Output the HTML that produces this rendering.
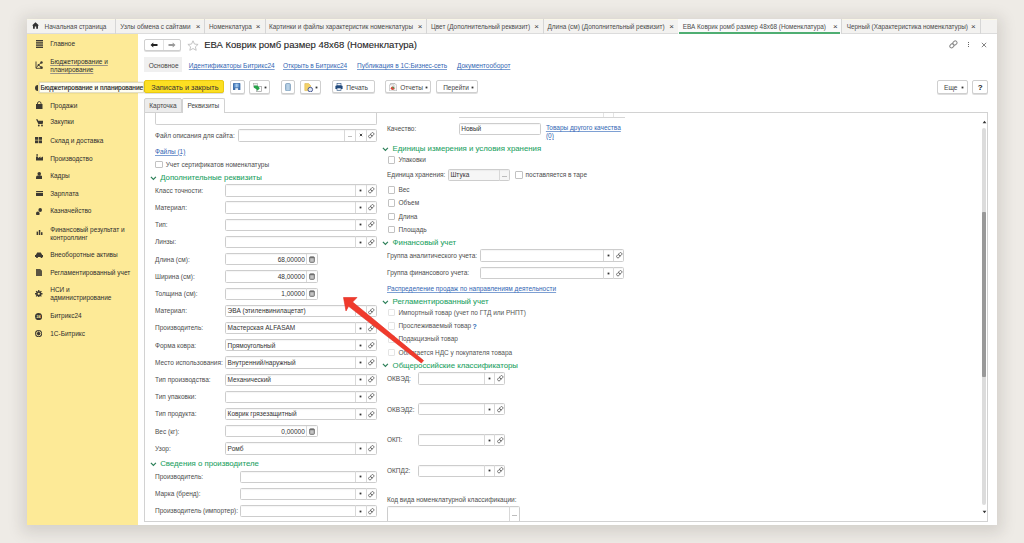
<!DOCTYPE html>
<html><head><meta charset="utf-8"><style>
html,body{margin:0;padding:0;}
body{width:1024px;height:543px;overflow:hidden;position:relative;background:#eeebe6;font-family:"Liberation Sans",sans-serif;}
.t{position:absolute;white-space:nowrap;}
.b{position:absolute;}
</style></head><body>
<div class="b" style="left:27px;top:19px;width:970.00px;height:506.00px;background:#fff;box-shadow:0 3px 14px 5px rgba(50,40,30,0.13);"></div><div class="b" style="left:27px;top:19px;width:970.00px;height:15.00px;background:#f3f2f0;border-bottom:1px solid #dcdcdc;box-sizing:border-box;"></div><div class="b" style="left:27px;top:19px;width:970.00px;height:1.00px;background:#faf7e8;"></div><div class="b" style="left:115px;top:19px;width:1px;height:15px;background:#d6d6d6"></div><div class="t" style="left:44.6px;top:23.68px;font-size:6.4px;line-height:6.4px;color:#4a4a4a;">Начальная страница</div><div class="b" style="left:204px;top:19px;width:1px;height:15px;background:#d6d6d6"></div><div class="t" style="left:120.3px;top:23.68px;font-size:6.4px;line-height:6.4px;color:#4a4a4a;">Узлы обмена с сайтами</div><div class="t" style="left:195.7px;top:22.80px;font-size:8px;line-height:8px;color:#3a3a3a;">×</div><div class="b" style="left:264.5px;top:19px;width:1px;height:15px;background:#d6d6d6"></div><div class="t" style="left:209px;top:23.68px;font-size:6.4px;line-height:6.4px;color:#4a4a4a;">Номенклатура</div><div class="t" style="left:255.8px;top:22.80px;font-size:8px;line-height:8px;color:#3a3a3a;">×</div><div class="b" style="left:426px;top:19px;width:1px;height:15px;background:#d6d6d6"></div><div class="t" style="left:269px;top:23.68px;font-size:6.4px;line-height:6.4px;color:#4a4a4a;">Картинки и файлы характеристик номенклатуры</div><div class="t" style="left:417.75px;top:22.80px;font-size:8px;line-height:8px;color:#3a3a3a;">×</div><div class="b" style="left:542.5px;top:19px;width:1px;height:15px;background:#d6d6d6"></div><div class="t" style="left:431px;top:23.68px;font-size:6.4px;line-height:6.4px;color:#4a4a4a;">Цвет (Дополнительный реквизит)</div><div class="t" style="left:534.25px;top:22.80px;font-size:8px;line-height:8px;color:#3a3a3a;">×</div><div class="b" style="left:677.5px;top:19px;width:1px;height:15px;background:#d6d6d6"></div><div class="t" style="left:547.5px;top:23.68px;font-size:6.4px;line-height:6.4px;color:#4a4a4a;">Длина (см) (Дополнительный реквизит)</div><div class="t" style="left:669.25px;top:22.80px;font-size:8px;line-height:8px;color:#3a3a3a;">×</div><div class="b" style="left:677.5px;top:19px;width:163.50px;height:15.00px;background:#fafafa;"></div><div class="b" style="left:679.0px;top:32px;width:161.00px;height:1.50px;background:#4fae72;"></div><div class="b" style="left:841px;top:19px;width:1px;height:15px;background:#d6d6d6"></div><div class="t" style="left:682.75px;top:23.68px;font-size:6.4px;line-height:6.4px;color:#4a4a4a;">ЕВА Коврик ромб размер 48х68 (Номенклатура)</div><div class="t" style="left:833px;top:22.80px;font-size:8px;line-height:8px;color:#3a3a3a;">×</div><div class="b" style="left:979.5px;top:19px;width:1px;height:15px;background:#d6d6d6"></div><div class="t" style="left:846.75px;top:23.68px;font-size:6.4px;line-height:6.4px;color:#4a4a4a;">Черный (Характеристика номенклатуры)</div><div class="t" style="left:971px;top:22.80px;font-size:8px;line-height:8px;color:#3a3a3a;">×</div><svg class="b" style="left:32px;top:22px;" width="7" height="7" viewBox="0 0 7 7"><path d="M3.5 0.3 L0 3.6 H1 V6.8 H2.8 V4.6 H4.2 V6.8 H6 V3.6 H7 Z" fill="#333"/></svg><div class="b" style="left:27px;top:34px;width:111.00px;height:491.00px;background:#fdea97;"></div><div class="t" style="left:50.2px;top:41.32px;font-size:6.5px;line-height:6.5px;color:#2e2e2e;">Главное</div><div class="t" style="left:50.2px;top:59.22px;font-size:6.5px;line-height:6.5px;color:#2e2e2e;text-decoration:underline;text-decoration-color:#9a9486;text-decoration-thickness:0.6px;text-underline-offset:1px;">Бюджетирование и</div><div class="t" style="left:50.2px;top:67.03px;font-size:6.5px;line-height:6.5px;color:#2e2e2e;text-decoration:underline;text-decoration-color:#9a9486;text-decoration-thickness:0.6px;text-underline-offset:1px;">планирование</div><div class="t" style="left:50.2px;top:102.62px;font-size:6.5px;line-height:6.5px;color:#2e2e2e;">Продажи</div><div class="t" style="left:50.2px;top:119.33px;font-size:6.5px;line-height:6.5px;color:#2e2e2e;">Закупки</div><div class="t" style="left:50.2px;top:137.83px;font-size:6.5px;line-height:6.5px;color:#2e2e2e;">Склад и доставка</div><div class="t" style="left:50.2px;top:155.53px;font-size:6.5px;line-height:6.5px;color:#2e2e2e;">Производство</div><div class="t" style="left:50.2px;top:173.03px;font-size:6.5px;line-height:6.5px;color:#2e2e2e;">Кадры</div><div class="t" style="left:50.2px;top:190.83px;font-size:6.5px;line-height:6.5px;color:#2e2e2e;">Зарплата</div><div class="t" style="left:50.2px;top:208.33px;font-size:6.5px;line-height:6.5px;color:#2e2e2e;">Казначейство</div><div class="t" style="left:50.2px;top:226.83px;font-size:6.5px;line-height:6.5px;color:#2e2e2e;">Финансовый результат и</div><div class="t" style="left:50.2px;top:234.63px;font-size:6.5px;line-height:6.5px;color:#2e2e2e;">контроллинг</div><div class="t" style="left:50.2px;top:252.03px;font-size:6.5px;line-height:6.5px;color:#2e2e2e;">Внеоборотные активы</div><div class="t" style="left:50.2px;top:269.52px;font-size:6.5px;line-height:6.5px;color:#2e2e2e;">Регламентированный учет</div><div class="t" style="left:50.2px;top:287.43px;font-size:6.5px;line-height:6.5px;color:#2e2e2e;">НСИ и</div><div class="t" style="left:50.2px;top:295.22px;font-size:6.5px;line-height:6.5px;color:#2e2e2e;">администрирование</div><div class="t" style="left:50.2px;top:313.12px;font-size:6.5px;line-height:6.5px;color:#2e2e2e;">Битрикс24</div><div class="t" style="left:50.2px;top:331.12px;font-size:6.5px;line-height:6.5px;color:#2e2e2e;">1С-Битрикс</div><svg class="b" style="left:35.5px;top:39.7px;" width="7" height="8" viewBox="0 0 7 8"><g fill="#3d3a33"><rect x="0" y="0" width="7" height="1.4"/><rect x="0" y="2.2" width="7" height="1.4"/><rect x="0" y="4.4" width="7" height="1.4"/><rect x="0" y="6.6" width="7" height="1.4"/></g></svg><svg class="b" style="left:35px;top:61px;" width="8" height="8" viewBox="0 0 8 8"><g fill="none" stroke="#3d3a33" stroke-width="0.9"><path d="M1 0.5 V7.3 H7.5"/><path d="M1.2 6.8 L3.5 4 L6.5 1.5"/><path d="M3.5 4 L6.5 6.5"/></g><g fill="#3d3a33"><circle cx="6.5" cy="1.5" r="1.2"/><circle cx="6.5" cy="6.5" r="1.2"/><circle cx="3.5" cy="4" r="0.9"/></g></svg><svg class="b" style="left:34.8px;top:84.5px;" width="3" height="6" viewBox="0 0 3 6"><path d="M3 0 A3 3 0 0 0 3 6 Z" fill="#3d3a33"/></svg><svg class="b" style="left:36px;top:100.5px;" width="6.5" height="8" viewBox="0 0 6.5 8"><g fill="#3d3a33"><path d="M1.5 3 V2 A1.8 1.8 0 0 1 5 2 V3" fill="none" stroke="#3d3a33" stroke-width="0.9"/><rect x="0" y="3" width="6.5" height="5"/></g></svg><svg class="b" style="left:35.5px;top:119px;" width="7.5" height="7.5" viewBox="0 0 7.5 7.5"><g fill="#3d3a33"><path d="M0 0.3 H1.6 L2.2 1.8 H7.5 L6.6 5 H2.4 Z"/><circle cx="2.8" cy="6.5" r="0.9"/><circle cx="6" cy="6.5" r="0.9"/></g></svg><svg class="b" style="left:35.3px;top:137px;" width="7" height="6.5" viewBox="0 0 7 6.5"><g fill="#3d3a33"><rect x="0" y="0" width="3.2" height="2.8"/><rect x="3.8" y="0" width="3.2" height="2.8"/><rect x="0" y="3.4" width="3.2" height="2.8"/><rect x="3.8" y="3.4" width="3.2" height="2.8"/></g></svg><svg class="b" style="left:35.5px;top:154.4px;" width="7" height="6.6" viewBox="0 0 7 6.6"><g fill="#3d3a33"><rect x="0.5" y="0" width="1.2" height="2"/><path d="M0 2.5 H2 V4 L4.5 2.6 V4 L7 2.6 V6.6 H0 Z"/></g></svg><svg class="b" style="left:35.7px;top:171.8px;" width="6.5" height="7" viewBox="0 0 6.5 7"><g fill="#3d3a33"><circle cx="3.25" cy="1.8" r="1.8"/><path d="M0 7 V5.5 A3.25 2.2 0 0 1 6.5 5.5 V7 Z"/></g></svg><svg class="b" style="left:35.5px;top:190.5px;" width="7.5" height="5" viewBox="0 0 7.5 5"><g fill="#3d3a33"><rect x="0" y="0" width="7.5" height="5" rx="0.5"/></g><rect x="0" y="1.2" width="7.5" height="0.8" fill="#fdea97"/></svg><svg class="b" style="left:36px;top:207.5px;" width="6" height="7.5" viewBox="0 0 6 7.5"><g fill="#3d3a33"><ellipse cx="1.8" cy="5.5" rx="1.8" ry="2"/><ellipse cx="4.2" cy="2" rx="1.8" ry="2"/></g></svg><svg class="b" style="left:35.5px;top:230.2px;" width="7" height="5.2" viewBox="0 0 7 5.2"><g fill="#3d3a33"><rect x="0.6" y="1.6" width="1.5" height="3.6"/><rect x="2.8" y="0" width="1.5" height="5.2"/><rect x="5" y="2.2" width="1.5" height="3"/></g></svg><svg class="b" style="left:34.5px;top:252px;" width="8.5" height="6.2" viewBox="0 0 8.5 6.2"><g fill="#3d3a33"><path d="M0.8 3 L2.2 0.5 H5.8 L7.2 3 H8.5 V5 H0 V3 Z"/><circle cx="2" cy="5.3" r="0.9"/><circle cx="6.5" cy="5.3" r="0.9"/></g></svg><svg class="b" style="left:35.5px;top:268.7px;" width="6.5" height="7" viewBox="0 0 6.5 7"><path d="M0 0 H4.2 L6.5 2.3 V7 H0 Z" fill="#3d3a33" opacity="0.85"/></svg><svg class="b" style="left:35px;top:289.8px;" width="7.5" height="7.5" viewBox="0 0 7.5 7.5"><g fill="#3d3a33"><circle cx="3.75" cy="3.75" r="2.6"/><g stroke="#3d3a33" stroke-width="1.3"><path d="M3.75 0 V7.5 M0 3.75 H7.5 M1.1 1.1 L6.4 6.4 M6.4 1.1 L1.1 6.4"/></g></g><circle cx="3.75" cy="3.75" r="1.1" fill="#fdea97"/></svg><svg class="b" style="left:35.2px;top:312.5px;" width="7.2" height="7.2" viewBox="0 0 7.2 7.2"><circle cx="3.6" cy="3.6" r="3.6" fill="#3d3a33"/><text x="3.6" y="5.1" font-size="3.8" text-anchor="middle" fill="#fdea97" font-family="Liberation Sans" font-weight="bold">24</text></svg><svg class="b" style="left:35.2px;top:330px;" width="7.2" height="7.2" viewBox="0 0 7.2 7.2"><circle cx="3.6" cy="3.6" r="3.6" fill="#3d3a33"/><circle cx="3.6" cy="3.6" r="2.2" fill="none" stroke="#fce99c" stroke-width="0.9"/><path d="M3.6 1.6 V3.8 H5" fill="none" stroke="#3d3a33" stroke-width="0.8"/></svg><div class="b" style="left:144.3px;top:38.8px;width:36.70px;height:12.20px;background:#fff;border:1px solid #cfcfcf;border-radius:2px;box-sizing:border-box;box-shadow:0 1px 0 rgba(0,0,0,0.13);"></div><div class="b" style="left:162.8px;top:40px;width:1.00px;height:10.00px;background:#e2e2e2;"></div><svg class="b" style="left:150px;top:42px;" width="8" height="6" viewBox="0 0 8 6"><path d="M0.5 3 L3.3 0.4 V2.1 H7.5 V3.9 H3.3 V5.6 Z" fill="#222"/></svg><svg class="b" style="left:168px;top:42px;" width="8" height="6" viewBox="0 0 8 6"><path d="M7.5 3 L4.7 0.4 V2.1 H0.5 V3.9 H4.7 V5.6 Z" fill="#999"/></svg><svg class="b" style="left:187px;top:40px;" width="12" height="11" viewBox="0 0 12 11"><path d="M6 0.8 L7.5 4.1 L11.1 4.4 L8.4 6.8 L9.2 10.3 L6 8.5 L2.8 10.3 L3.6 6.8 L0.9 4.4 L4.5 4.1 Z" fill="none" stroke="#bdbdbd" stroke-width="0.9"/></svg><div class="t" style="left:204.2px;top:39.67px;font-size:9.5px;line-height:9.5px;color:#1e1e1e;-webkit-text-stroke:0.1px #1e1e1e;">ЕВА Коврик ромб размер 48х68 (Номенклатура)</div><svg class="b" style="left:949.3px;top:40.2px;" width="9" height="9" viewBox="0 0 9 9"><g fill="none" stroke="#8a8a8a" stroke-width="1"><rect x="1.2" y="3.6" width="3.4" height="4.4" rx="1.6" transform="rotate(45 2.9 5.8)"/><rect x="4.2" y="0.8" width="3.4" height="4.4" rx="1.6" transform="rotate(45 5.9 3)"/></g></svg><div class="b" style="left:968px;top:41.8px;width:1.20px;height:1.20px;background:#666;"></div><div class="b" style="left:968px;top:44.0px;width:1.20px;height:1.20px;background:#666;"></div><div class="b" style="left:968px;top:46.199999999999996px;width:1.20px;height:1.20px;background:#666;"></div><svg class="b" style="left:981px;top:41.5px;" width="6" height="6" viewBox="0 0 6 6"><path d="M0.8 0.8 L5.2 5.2 M5.2 0.8 L0.8 5.2" stroke="#777" stroke-width="0.9"/></svg><div class="b" style="left:144.1px;top:56.7px;width:38.40px;height:15.80px;background:#f0f0f0;"></div><div class="t" style="left:148.8px;top:62.82px;font-size:6.5px;line-height:6.5px;color:#444;">Основное</div><div class="t" style="left:188.8px;top:63.02px;font-size:6.5px;line-height:6.5px;color:#3266b3;text-decoration:underline;text-decoration-color:#7ea0d3;">Идентификаторы Битрикс24</div><div class="t" style="left:283px;top:63.02px;font-size:6.5px;line-height:6.5px;color:#3266b3;text-decoration:underline;text-decoration-color:#7ea0d3;">Открыть в Битрикс24</div><div class="t" style="left:357px;top:63.02px;font-size:6.5px;line-height:6.5px;color:#3266b3;text-decoration:underline;text-decoration-color:#7ea0d3;">Публикация в 1С:Бизнес-сеть</div><div class="t" style="left:457px;top:63.02px;font-size:6.5px;line-height:6.5px;color:#3266b3;text-decoration:underline;text-decoration-color:#7ea0d3;">Документооборот</div><div class="b" style="left:144.4px;top:80.4px;width:80.10px;height:13.10px;background:#fcdf22;border:1px solid #ebcb10;border-radius:2px;box-sizing:border-box;box-shadow:0 1px 0 rgba(0,0,0,0.13);"></div><div class="t" style="left:151.3px;top:83.83px;font-size:7.4px;line-height:7.4px;color:#333;">Записать и закрыть</div><div class="b" style="left:229.9px;top:80.4px;width:14.70px;height:13.20px;background:#fff;border:1px solid #cfcfcf;border-radius:2px;box-sizing:border-box;box-shadow:0 1px 0 rgba(0,0,0,0.13);"></div><svg class="b" style="left:233.3px;top:82.8px;" width="7.4" height="7.4" viewBox="0 0 7.4 7.4"><defs><linearGradient id="fg" x1="0" y1="0" x2="1" y2="0"><stop offset="0" stop-color="#4f83c2"/><stop offset="0.5" stop-color="#a9cdef"/><stop offset="1" stop-color="#4f83c2"/></linearGradient></defs><rect x="0" y="0" width="7.4" height="7.4" rx="0.7" fill="#3f70ad"/><rect x="1" y="0.6" width="5.4" height="3.8" fill="url(#fg)"/><rect x="2.3" y="5.2" width="2.8" height="2.2" fill="#e8f0f8"/></svg><div class="b" style="left:249.4px;top:80.4px;width:21.00px;height:13.20px;background:#fff;border:1px solid #cfcfcf;border-radius:2px;box-sizing:border-box;box-shadow:0 1px 0 rgba(0,0,0,0.13);"></div><svg class="b" style="left:252.5px;top:82.5px;" width="9" height="9" viewBox="0 0 9 9"><rect x="3.5" y="3.5" width="5" height="5" fill="#fff" stroke="#999" stroke-width="0.7"/><rect x="0.5" y="0.5" width="4" height="3.5" fill="#eee" stroke="#aaa" stroke-width="0.6"/><path d="M1 2.6 L4.5 2.6 L6.8 5.2 L4.5 7.8 L3.5 6.2 L1 4.8 Z" fill="#26a34a"/></svg><svg class="b" style="left:263.65px;top:85.8px;" width="3" height="3" viewBox="0 0 3 3"><rect x="0.6" y="0.6" width="1.8" height="1.8" fill="#333"/></svg><div class="b" style="left:280.7px;top:80.4px;width:14.60px;height:13.20px;background:#fff;border:1px solid #cfcfcf;border-radius:2px;box-sizing:border-box;box-shadow:0 1px 0 rgba(0,0,0,0.13);"></div><svg class="b" style="left:285px;top:82.6px;" width="6" height="8.4" viewBox="0 0 6 8.4"><rect x="0.5" y="0.5" width="5" height="7.4" rx="1.2" fill="#a9c7df" stroke="#7d9dba" stroke-width="0.8"/><rect x="2.5" y="1.2" width="1" height="6" fill="#c9dcec"/></svg><div class="b" style="left:300.2px;top:80.4px;width:21.00px;height:13.20px;background:#fff;border:1px solid #cfcfcf;border-radius:2px;box-sizing:border-box;box-shadow:0 1px 0 rgba(0,0,0,0.13);"></div><svg class="b" style="left:303.5px;top:82.5px;" width="10" height="9.5" viewBox="0 0 10 9.5"><path d="M0.8 0.6 H4.6 L6.6 2.6 V7.6 H0.8 Z" fill="#f3d26a" stroke="#dcb64a" stroke-width="0.6"/><circle cx="6.3" cy="6.6" r="2.3" fill="#dfe6f2" stroke="#3a4c8c" stroke-width="0.9"/></svg><svg class="b" style="left:314.85px;top:85.8px;" width="3" height="3" viewBox="0 0 3 3"><rect x="0.6" y="0.6" width="1.8" height="1.8" fill="#333"/></svg><div class="b" style="left:331.9px;top:80.4px;width:43.00px;height:12.80px;background:#fff;border:1px solid #cfcfcf;border-radius:2px;box-sizing:border-box;box-shadow:0 1px 0 rgba(0,0,0,0.13);"></div><svg class="b" style="left:335.2px;top:83px;" width="8" height="7.6" viewBox="0 0 8 7.6"><rect x="2" y="0.4" width="4" height="2.4" fill="#f2f4f8" stroke="#284f80" stroke-width="0.6"/><path d="M0.4 3.6 Q0.4 2.6 1.4 2.6 H6.6 Q7.6 2.6 7.6 3.6 V6 H0.4 Z" fill="#224a7c"/><rect x="2" y="5" width="4" height="2.3" fill="#f2f4f8" stroke="#284f80" stroke-width="0.6"/></svg><div class="t" style="left:346.3px;top:84.97px;font-size:6.6px;line-height:6.6px;color:#444;">Печать</div><div class="b" style="left:385.4px;top:80.4px;width:46.10px;height:12.80px;background:#fff;border:1px solid #cfcfcf;border-radius:2px;box-sizing:border-box;box-shadow:0 1px 0 rgba(0,0,0,0.13);"></div><svg class="b" style="left:388.5px;top:82.6px;" width="8.5" height="8.5" viewBox="0 0 8.5 8.5"><path d="M1.5 0.5 H6 L7.8 2.3 V7.9 H1.5 Z" fill="#f6f6f6" stroke="#9a9a9a" stroke-width="0.6"/><path d="M0.5 1.8 H5 V7.9 H0.5 Z" fill="#fafafa" stroke="#a8a8a8" stroke-width="0.5"/><circle cx="3.6" cy="5.3" r="1.8" fill="#d94a3a"/><path d="M3.6 5.3 V3.5 A1.8 1.8 0 0 1 5.4 5.3 Z" fill="#3aa45a"/></svg><div class="t" style="left:400.2px;top:84.97px;font-size:6.6px;line-height:6.6px;color:#444;">Отчеты</div><svg class="b" style="left:425.35px;top:85.8px;" width="3" height="3" viewBox="0 0 3 3"><rect x="0.6" y="0.6" width="1.8" height="1.8" fill="#333"/></svg><div class="b" style="left:436.2px;top:80.4px;width:41.40px;height:12.80px;background:#fff;border:1px solid #cfcfcf;border-radius:2px;box-sizing:border-box;box-shadow:0 1px 0 rgba(0,0,0,0.13);"></div><div class="t" style="left:443.2px;top:85.03px;font-size:6.5px;line-height:6.5px;color:#444;">Перейти</div><svg class="b" style="left:471.15px;top:85.8px;" width="3" height="3" viewBox="0 0 3 3"><rect x="0.6" y="0.6" width="1.8" height="1.8" fill="#333"/></svg><div class="b" style="left:937px;top:80.4px;width:31.30px;height:13.20px;background:#fff;border:1px solid #cfcfcf;border-radius:2px;box-sizing:border-box;box-shadow:0 1px 0 rgba(0,0,0,0.13);"></div><div class="t" style="left:944px;top:84.97px;font-size:6.6px;line-height:6.6px;color:#444;">Еще</div><svg class="b" style="left:961.35px;top:85.8px;" width="3" height="3" viewBox="0 0 3 3"><rect x="0.6" y="0.6" width="1.8" height="1.8" fill="#333"/></svg><div class="b" style="left:972.2px;top:80.4px;width:15.80px;height:13.20px;background:#fff;border:1px solid #cfcfcf;border-radius:2px;box-sizing:border-box;box-shadow:0 1px 0 rgba(0,0,0,0.13);"></div><div class="t" style="left:977.7px;top:83.70px;font-size:8px;line-height:8px;color:#222;font-weight:bold;">?</div><div class="b" style="left:144.4px;top:112px;width:843.60px;height:410.00px;background:#fff;border:1px solid #d2d2d2;box-sizing:border-box;"></div><div class="b" style="left:144.4px;top:98.4px;width:38.10px;height:14.60px;background:#ececec;border:1px solid #d2d2d2;border-radius:2px 2px 0 0;box-sizing:border-box;"></div><div class="t" style="left:149.3px;top:102.83px;font-size:6.5px;line-height:6.5px;color:#444;">Карточка</div><div class="b" style="left:182px;top:98.4px;width:42.50px;height:14.60px;background:#fff;border:1px solid #d2d2d2;border-bottom:none;border-radius:2px 2px 0 0;box-sizing:border-box;"></div><div class="t" style="left:187.4px;top:102.83px;font-size:6.5px;line-height:6.5px;color:#444;">Реквизиты</div><svg class="b" style="left:981.5px;top:119.5px;" width="5" height="4" viewBox="0 0 5 4"><path d="M0.6 3.2 L2.5 0.8 L4.4 3.2 Z" fill="#333"/></svg><div class="b" style="left:982px;top:128px;width:4.20px;height:377.00px;background:#dcdcdc;border-radius:2px;"></div><div class="b" style="left:982px;top:212px;width:4.20px;height:165.00px;background:#999;border-radius:1px;"></div><svg class="b" style="left:981.5px;top:509.5px;" width="5" height="4" viewBox="0 0 5 4"><path d="M0.6 0.8 L2.5 3.2 L4.4 0.8 Z" fill="#333"/></svg><div class="b" style="left:154.6px;top:113px;width:222.40px;height:11.60px;border:1px solid #d0d0d0;border-top:none;border-radius:0 0 2px 2px;box-sizing:border-box;"></div><div class="t" style="left:155px;top:132.73px;font-size:6.5px;line-height:6.5px;color:#4d4d4d;">Файл описания для сайта:</div><div class="b" style="left:237.5px;top:129.2px;width:139.10px;height:12.40px;background:#fff;border:1px solid #cdcdcd;border-radius:1.5px;box-sizing:border-box;box-shadow:inset 0 1px 1px rgba(0,0,0,0.04);"></div><div class="b" style="left:344.4px;top:129.7px;width:1.00px;height:11.40px;background:#d8d8d8;"></div><div class="b" style="left:354.9px;top:129.7px;width:1.00px;height:11.40px;background:#d8d8d8;"></div><div class="b" style="left:365.8px;top:129.7px;width:1.00px;height:11.40px;background:#d8d8d8;"></div><div class="b" style="left:348.15px;top:136.2px;width:4.30px;height:1.00px;background:#bdbdbd;"></div><svg class="b" style="left:358.85px;top:132.89999999999998px;" width="4" height="4" viewBox="0 0 4 4"><path d="M0.8 0.8 L3.2 3.2 M3.2 0.8 L0.8 3.2" stroke="#333" stroke-width="0.9"/></svg><svg class="b" style="left:368.25000000000006px;top:132.09999999999997px;" width="7" height="7" viewBox="0 0 7 7"><g fill="none" stroke="#5a5a5a" stroke-width="0.8"><rect x="0.9" y="2.6" width="2.7" height="3.4" rx="1.2" transform="rotate(45 2.25 4.3)"/><rect x="2.95" y="0.5" width="2.7" height="3.4" rx="1.2" transform="rotate(45 4.3 2.2)"/></g></svg><div class="t" style="left:155px;top:148.73px;font-size:6.5px;line-height:6.5px;color:#3266b3;text-decoration:underline;text-decoration-color:#7ea0d3;">Файлы (1)</div><div class="b" style="left:155.2px;top:160.60000000000002px;width:7.50px;height:7.50px;background:#fff;border:1px solid #c2c2c2;border-radius:1px;box-sizing:border-box;"></div><div class="t" style="left:165.7px;top:161.63px;font-size:6.5px;line-height:6.5px;color:#4d4d4d;">Учет сертификатов номенклатуры</div><svg class="b" style="left:150.0px;top:175.5px;" width="7" height="5" viewBox="0 0 7 5"><path d="M0.9 0.9 L3.4 3.4 L5.9 0.9" fill="none" stroke="#2b7f58" stroke-width="1.2"/></svg><div class="t" style="left:160.2px;top:174.01px;font-size:7.8px;line-height:7.8px;color:#23a263;-webkit-text-stroke:0.07px #23a263;">Дополнительные реквизиты</div><div class="t" style="left:155px;top:187.73px;font-size:6.5px;line-height:6.5px;color:#4d4d4d;">Класс точности:</div><div class="b" style="left:225.4px;top:184.20000000000002px;width:151.20px;height:12.40px;background:#fff;border:1px solid #cdcdcd;border-radius:1.5px;box-sizing:border-box;box-shadow:inset 0 1px 1px rgba(0,0,0,0.04);"></div><div class="b" style="left:355.0px;top:184.70000000000002px;width:1.00px;height:11.40px;background:#d8d8d8;"></div><div class="b" style="left:365.8px;top:184.70000000000002px;width:1.00px;height:11.40px;background:#d8d8d8;"></div><svg class="b" style="left:359.4px;top:188.9px;" width="3" height="3" viewBox="0 0 3 3"><rect x="0.6" y="0.6" width="1.8" height="1.8" fill="#333"/></svg><svg class="b" style="left:368.25000000000006px;top:187.1px;" width="7" height="7" viewBox="0 0 7 7"><g fill="none" stroke="#5a5a5a" stroke-width="0.8"><rect x="0.9" y="2.6" width="2.7" height="3.4" rx="1.2" transform="rotate(45 2.25 4.3)"/><rect x="2.95" y="0.5" width="2.7" height="3.4" rx="1.2" transform="rotate(45 4.3 2.2)"/></g></svg><div class="t" style="left:155px;top:204.83px;font-size:6.5px;line-height:6.5px;color:#4d4d4d;">Материал:</div><div class="b" style="left:225.4px;top:201.3px;width:151.20px;height:12.40px;background:#fff;border:1px solid #cdcdcd;border-radius:1.5px;box-sizing:border-box;box-shadow:inset 0 1px 1px rgba(0,0,0,0.04);"></div><div class="b" style="left:355.0px;top:201.8px;width:1.00px;height:11.40px;background:#d8d8d8;"></div><div class="b" style="left:365.8px;top:201.8px;width:1.00px;height:11.40px;background:#d8d8d8;"></div><svg class="b" style="left:359.4px;top:206.0px;" width="3" height="3" viewBox="0 0 3 3"><rect x="0.6" y="0.6" width="1.8" height="1.8" fill="#333"/></svg><svg class="b" style="left:368.25000000000006px;top:204.2px;" width="7" height="7" viewBox="0 0 7 7"><g fill="none" stroke="#5a5a5a" stroke-width="0.8"><rect x="0.9" y="2.6" width="2.7" height="3.4" rx="1.2" transform="rotate(45 2.25 4.3)"/><rect x="2.95" y="0.5" width="2.7" height="3.4" rx="1.2" transform="rotate(45 4.3 2.2)"/></g></svg><div class="t" style="left:155px;top:222.03px;font-size:6.5px;line-height:6.5px;color:#4d4d4d;">Тип:</div><div class="b" style="left:225.4px;top:218.5px;width:151.20px;height:12.40px;background:#fff;border:1px solid #cdcdcd;border-radius:1.5px;box-sizing:border-box;box-shadow:inset 0 1px 1px rgba(0,0,0,0.04);"></div><div class="b" style="left:355.0px;top:219.0px;width:1.00px;height:11.40px;background:#d8d8d8;"></div><div class="b" style="left:365.8px;top:219.0px;width:1.00px;height:11.40px;background:#d8d8d8;"></div><svg class="b" style="left:359.4px;top:223.2px;" width="3" height="3" viewBox="0 0 3 3"><rect x="0.6" y="0.6" width="1.8" height="1.8" fill="#333"/></svg><svg class="b" style="left:368.25000000000006px;top:221.39999999999998px;" width="7" height="7" viewBox="0 0 7 7"><g fill="none" stroke="#5a5a5a" stroke-width="0.8"><rect x="0.9" y="2.6" width="2.7" height="3.4" rx="1.2" transform="rotate(45 2.25 4.3)"/><rect x="2.95" y="0.5" width="2.7" height="3.4" rx="1.2" transform="rotate(45 4.3 2.2)"/></g></svg><div class="t" style="left:155px;top:239.33px;font-size:6.5px;line-height:6.5px;color:#4d4d4d;">Линзы:</div><div class="b" style="left:225.4px;top:235.8px;width:151.20px;height:12.40px;background:#fff;border:1px solid #cdcdcd;border-radius:1.5px;box-sizing:border-box;box-shadow:inset 0 1px 1px rgba(0,0,0,0.04);"></div><div class="b" style="left:355.0px;top:236.3px;width:1.00px;height:11.40px;background:#d8d8d8;"></div><div class="b" style="left:365.8px;top:236.3px;width:1.00px;height:11.40px;background:#d8d8d8;"></div><svg class="b" style="left:359.4px;top:240.5px;" width="3" height="3" viewBox="0 0 3 3"><rect x="0.6" y="0.6" width="1.8" height="1.8" fill="#333"/></svg><svg class="b" style="left:368.25000000000006px;top:238.7px;" width="7" height="7" viewBox="0 0 7 7"><g fill="none" stroke="#5a5a5a" stroke-width="0.8"><rect x="0.9" y="2.6" width="2.7" height="3.4" rx="1.2" transform="rotate(45 2.25 4.3)"/><rect x="2.95" y="0.5" width="2.7" height="3.4" rx="1.2" transform="rotate(45 4.3 2.2)"/></g></svg><div class="t" style="left:155px;top:256.62px;font-size:6.5px;line-height:6.5px;color:#4d4d4d;">Длина (см):</div><div class="b" style="left:225.4px;top:253.10000000000002px;width:92.30px;height:12.40px;background:#fff;border:1px solid #cdcdcd;border-radius:1.5px;box-sizing:border-box;box-shadow:inset 0 1px 1px rgba(0,0,0,0.04);"></div><div class="b" style="left:306.1px;top:253.60000000000002px;width:1.00px;height:11.40px;background:#d8d8d8;"></div><svg class="b" style="left:309.15px;top:255.8px;" width="6" height="7" viewBox="0 0 6 7"><rect x="0.7" y="0.9" width="4.6" height="5.4" rx="0.6" fill="#c4c4c4" stroke="#6f6f6f" stroke-width="1"/><rect x="0.7" y="0.9" width="4.6" height="1.3" fill="#6f6f6f"/></svg><div class="t" style="right:719.2px;top:256.62px;font-size:6.5px;line-height:6.5px;color:#333;text-align:right;">68,00000</div><div class="t" style="left:155px;top:273.82px;font-size:6.5px;line-height:6.5px;color:#4d4d4d;">Ширина (см):</div><div class="b" style="left:225.4px;top:270.3px;width:92.30px;height:12.40px;background:#fff;border:1px solid #cdcdcd;border-radius:1.5px;box-sizing:border-box;box-shadow:inset 0 1px 1px rgba(0,0,0,0.04);"></div><div class="b" style="left:306.1px;top:270.8px;width:1.00px;height:11.40px;background:#d8d8d8;"></div><svg class="b" style="left:309.15px;top:273.0px;" width="6" height="7" viewBox="0 0 6 7"><rect x="0.7" y="0.9" width="4.6" height="5.4" rx="0.6" fill="#c4c4c4" stroke="#6f6f6f" stroke-width="1"/><rect x="0.7" y="0.9" width="4.6" height="1.3" fill="#6f6f6f"/></svg><div class="t" style="right:719.2px;top:273.82px;font-size:6.5px;line-height:6.5px;color:#333;text-align:right;">48,00000</div><div class="t" style="left:155px;top:291.02px;font-size:6.5px;line-height:6.5px;color:#4d4d4d;">Толщина (см):</div><div class="b" style="left:225.4px;top:287.5px;width:92.30px;height:12.40px;background:#fff;border:1px solid #cdcdcd;border-radius:1.5px;box-sizing:border-box;box-shadow:inset 0 1px 1px rgba(0,0,0,0.04);"></div><div class="b" style="left:306.1px;top:288.0px;width:1.00px;height:11.40px;background:#d8d8d8;"></div><svg class="b" style="left:309.15px;top:290.2px;" width="6" height="7" viewBox="0 0 6 7"><rect x="0.7" y="0.9" width="4.6" height="5.4" rx="0.6" fill="#c4c4c4" stroke="#6f6f6f" stroke-width="1"/><rect x="0.7" y="0.9" width="4.6" height="1.3" fill="#6f6f6f"/></svg><div class="t" style="right:719.2px;top:291.02px;font-size:6.5px;line-height:6.5px;color:#333;text-align:right;">1,00000</div><div class="t" style="left:155px;top:308.22px;font-size:6.5px;line-height:6.5px;color:#4d4d4d;">Материал:</div><div class="b" style="left:225.4px;top:304.7px;width:151.20px;height:12.40px;background:#fff;border:1px solid #cdcdcd;border-radius:1.5px;box-sizing:border-box;box-shadow:inset 0 1px 1px rgba(0,0,0,0.04);"></div><div class="b" style="left:355.0px;top:305.2px;width:1.00px;height:11.40px;background:#d8d8d8;"></div><div class="b" style="left:365.8px;top:305.2px;width:1.00px;height:11.40px;background:#d8d8d8;"></div><svg class="b" style="left:359.4px;top:309.4px;" width="3" height="3" viewBox="0 0 3 3"><rect x="0.6" y="0.6" width="1.8" height="1.8" fill="#333"/></svg><svg class="b" style="left:368.25000000000006px;top:307.59999999999997px;" width="7" height="7" viewBox="0 0 7 7"><g fill="none" stroke="#5a5a5a" stroke-width="0.8"><rect x="0.9" y="2.6" width="2.7" height="3.4" rx="1.2" transform="rotate(45 2.25 4.3)"/><rect x="2.95" y="0.5" width="2.7" height="3.4" rx="1.2" transform="rotate(45 4.3 2.2)"/></g></svg><div class="t" style="left:227.6px;top:308.22px;font-size:6.5px;line-height:6.5px;color:#333;">ЭВА (этиленвинилацетат)</div><div class="t" style="left:155px;top:325.43px;font-size:6.5px;line-height:6.5px;color:#4d4d4d;">Производитель:</div><div class="b" style="left:225.4px;top:321.90000000000003px;width:151.20px;height:12.40px;background:#fff;border:1px solid #cdcdcd;border-radius:1.5px;box-sizing:border-box;box-shadow:inset 0 1px 1px rgba(0,0,0,0.04);"></div><div class="b" style="left:355.0px;top:322.40000000000003px;width:1.00px;height:11.40px;background:#d8d8d8;"></div><div class="b" style="left:365.8px;top:322.40000000000003px;width:1.00px;height:11.40px;background:#d8d8d8;"></div><svg class="b" style="left:359.4px;top:326.6px;" width="3" height="3" viewBox="0 0 3 3"><rect x="0.6" y="0.6" width="1.8" height="1.8" fill="#333"/></svg><svg class="b" style="left:368.25000000000006px;top:324.8px;" width="7" height="7" viewBox="0 0 7 7"><g fill="none" stroke="#5a5a5a" stroke-width="0.8"><rect x="0.9" y="2.6" width="2.7" height="3.4" rx="1.2" transform="rotate(45 2.25 4.3)"/><rect x="2.95" y="0.5" width="2.7" height="3.4" rx="1.2" transform="rotate(45 4.3 2.2)"/></g></svg><div class="t" style="left:227.6px;top:325.43px;font-size:6.5px;line-height:6.5px;color:#333;">Мастерская ALFASAM</div><div class="t" style="left:155px;top:342.62px;font-size:6.5px;line-height:6.5px;color:#4d4d4d;">Форма ковра:</div><div class="b" style="left:225.4px;top:339.1px;width:151.20px;height:12.40px;background:#fff;border:1px solid #cdcdcd;border-radius:1.5px;box-sizing:border-box;box-shadow:inset 0 1px 1px rgba(0,0,0,0.04);"></div><div class="b" style="left:355.0px;top:339.6px;width:1.00px;height:11.40px;background:#d8d8d8;"></div><div class="b" style="left:365.8px;top:339.6px;width:1.00px;height:11.40px;background:#d8d8d8;"></div><svg class="b" style="left:359.4px;top:343.8px;" width="3" height="3" viewBox="0 0 3 3"><rect x="0.6" y="0.6" width="1.8" height="1.8" fill="#333"/></svg><svg class="b" style="left:368.25000000000006px;top:342.0px;" width="7" height="7" viewBox="0 0 7 7"><g fill="none" stroke="#5a5a5a" stroke-width="0.8"><rect x="0.9" y="2.6" width="2.7" height="3.4" rx="1.2" transform="rotate(45 2.25 4.3)"/><rect x="2.95" y="0.5" width="2.7" height="3.4" rx="1.2" transform="rotate(45 4.3 2.2)"/></g></svg><div class="t" style="left:227.6px;top:342.62px;font-size:6.5px;line-height:6.5px;color:#333;">Прямоугольный</div><div class="t" style="left:155px;top:359.82px;font-size:6.5px;line-height:6.5px;color:#4d4d4d;">Место использования:</div><div class="b" style="left:225.4px;top:356.3px;width:151.20px;height:12.40px;background:#fff;border:1px solid #cdcdcd;border-radius:1.5px;box-sizing:border-box;box-shadow:inset 0 1px 1px rgba(0,0,0,0.04);"></div><div class="b" style="left:355.0px;top:356.8px;width:1.00px;height:11.40px;background:#d8d8d8;"></div><div class="b" style="left:365.8px;top:356.8px;width:1.00px;height:11.40px;background:#d8d8d8;"></div><svg class="b" style="left:359.4px;top:361.0px;" width="3" height="3" viewBox="0 0 3 3"><rect x="0.6" y="0.6" width="1.8" height="1.8" fill="#333"/></svg><svg class="b" style="left:368.25000000000006px;top:359.2px;" width="7" height="7" viewBox="0 0 7 7"><g fill="none" stroke="#5a5a5a" stroke-width="0.8"><rect x="0.9" y="2.6" width="2.7" height="3.4" rx="1.2" transform="rotate(45 2.25 4.3)"/><rect x="2.95" y="0.5" width="2.7" height="3.4" rx="1.2" transform="rotate(45 4.3 2.2)"/></g></svg><div class="t" style="left:227.6px;top:359.82px;font-size:6.5px;line-height:6.5px;color:#333;">Внутренний/наружный</div><div class="t" style="left:155px;top:377.02px;font-size:6.5px;line-height:6.5px;color:#4d4d4d;">Тип производства:</div><div class="b" style="left:225.4px;top:373.5px;width:151.20px;height:12.40px;background:#fff;border:1px solid #cdcdcd;border-radius:1.5px;box-sizing:border-box;box-shadow:inset 0 1px 1px rgba(0,0,0,0.04);"></div><div class="b" style="left:355.0px;top:374.0px;width:1.00px;height:11.40px;background:#d8d8d8;"></div><div class="b" style="left:365.8px;top:374.0px;width:1.00px;height:11.40px;background:#d8d8d8;"></div><svg class="b" style="left:359.4px;top:378.2px;" width="3" height="3" viewBox="0 0 3 3"><rect x="0.6" y="0.6" width="1.8" height="1.8" fill="#333"/></svg><svg class="b" style="left:368.25000000000006px;top:376.4px;" width="7" height="7" viewBox="0 0 7 7"><g fill="none" stroke="#5a5a5a" stroke-width="0.8"><rect x="0.9" y="2.6" width="2.7" height="3.4" rx="1.2" transform="rotate(45 2.25 4.3)"/><rect x="2.95" y="0.5" width="2.7" height="3.4" rx="1.2" transform="rotate(45 4.3 2.2)"/></g></svg><div class="t" style="left:227.6px;top:377.02px;font-size:6.5px;line-height:6.5px;color:#333;">Механический</div><div class="t" style="left:155px;top:394.02px;font-size:6.5px;line-height:6.5px;color:#4d4d4d;">Тип упаковки:</div><div class="b" style="left:225.4px;top:390.5px;width:151.20px;height:12.40px;background:#fff;border:1px solid #cdcdcd;border-radius:1.5px;box-sizing:border-box;box-shadow:inset 0 1px 1px rgba(0,0,0,0.04);"></div><div class="b" style="left:355.0px;top:391.0px;width:1.00px;height:11.40px;background:#d8d8d8;"></div><div class="b" style="left:365.8px;top:391.0px;width:1.00px;height:11.40px;background:#d8d8d8;"></div><svg class="b" style="left:359.4px;top:395.2px;" width="3" height="3" viewBox="0 0 3 3"><rect x="0.6" y="0.6" width="1.8" height="1.8" fill="#333"/></svg><svg class="b" style="left:368.25000000000006px;top:393.4px;" width="7" height="7" viewBox="0 0 7 7"><g fill="none" stroke="#5a5a5a" stroke-width="0.8"><rect x="0.9" y="2.6" width="2.7" height="3.4" rx="1.2" transform="rotate(45 2.25 4.3)"/><rect x="2.95" y="0.5" width="2.7" height="3.4" rx="1.2" transform="rotate(45 4.3 2.2)"/></g></svg><div class="t" style="left:155px;top:411.32px;font-size:6.5px;line-height:6.5px;color:#4d4d4d;">Тип продукта:</div><div class="b" style="left:225.4px;top:407.8px;width:151.20px;height:12.40px;background:#fff;border:1px solid #cdcdcd;border-radius:1.5px;box-sizing:border-box;box-shadow:inset 0 1px 1px rgba(0,0,0,0.04);"></div><div class="b" style="left:355.0px;top:408.3px;width:1.00px;height:11.40px;background:#d8d8d8;"></div><div class="b" style="left:365.8px;top:408.3px;width:1.00px;height:11.40px;background:#d8d8d8;"></div><svg class="b" style="left:359.4px;top:412.5px;" width="3" height="3" viewBox="0 0 3 3"><rect x="0.6" y="0.6" width="1.8" height="1.8" fill="#333"/></svg><svg class="b" style="left:368.25000000000006px;top:410.7px;" width="7" height="7" viewBox="0 0 7 7"><g fill="none" stroke="#5a5a5a" stroke-width="0.8"><rect x="0.9" y="2.6" width="2.7" height="3.4" rx="1.2" transform="rotate(45 2.25 4.3)"/><rect x="2.95" y="0.5" width="2.7" height="3.4" rx="1.2" transform="rotate(45 4.3 2.2)"/></g></svg><div class="t" style="left:227.6px;top:411.32px;font-size:6.5px;line-height:6.5px;color:#333;">Коврик грязезащитный</div><div class="t" style="left:155px;top:428.52px;font-size:6.5px;line-height:6.5px;color:#4d4d4d;">Вес (кг):</div><div class="b" style="left:225.4px;top:425.0px;width:92.30px;height:12.40px;background:#fff;border:1px solid #cdcdcd;border-radius:1.5px;box-sizing:border-box;box-shadow:inset 0 1px 1px rgba(0,0,0,0.04);"></div><div class="b" style="left:306.1px;top:425.5px;width:1.00px;height:11.40px;background:#d8d8d8;"></div><svg class="b" style="left:309.15px;top:427.7px;" width="6" height="7" viewBox="0 0 6 7"><rect x="0.7" y="0.9" width="4.6" height="5.4" rx="0.6" fill="#c4c4c4" stroke="#6f6f6f" stroke-width="1"/><rect x="0.7" y="0.9" width="4.6" height="1.3" fill="#6f6f6f"/></svg><div class="t" style="right:719.2px;top:428.52px;font-size:6.5px;line-height:6.5px;color:#333;text-align:right;">0,00000</div><div class="t" style="left:155px;top:445.93px;font-size:6.5px;line-height:6.5px;color:#4d4d4d;">Узор:</div><div class="b" style="left:225.4px;top:442.40000000000003px;width:151.20px;height:12.40px;background:#fff;border:1px solid #cdcdcd;border-radius:1.5px;box-sizing:border-box;box-shadow:inset 0 1px 1px rgba(0,0,0,0.04);"></div><div class="b" style="left:355.0px;top:442.90000000000003px;width:1.00px;height:11.40px;background:#d8d8d8;"></div><div class="b" style="left:365.8px;top:442.90000000000003px;width:1.00px;height:11.40px;background:#d8d8d8;"></div><svg class="b" style="left:359.4px;top:447.1px;" width="3" height="3" viewBox="0 0 3 3"><rect x="0.6" y="0.6" width="1.8" height="1.8" fill="#333"/></svg><svg class="b" style="left:368.25000000000006px;top:445.3px;" width="7" height="7" viewBox="0 0 7 7"><g fill="none" stroke="#5a5a5a" stroke-width="0.8"><rect x="0.9" y="2.6" width="2.7" height="3.4" rx="1.2" transform="rotate(45 2.25 4.3)"/><rect x="2.95" y="0.5" width="2.7" height="3.4" rx="1.2" transform="rotate(45 4.3 2.2)"/></g></svg><div class="t" style="left:227.6px;top:445.93px;font-size:6.5px;line-height:6.5px;color:#333;">Ромб</div><svg class="b" style="left:150.0px;top:461.7px;" width="7" height="5" viewBox="0 0 7 5"><path d="M0.9 0.9 L3.4 3.4 L5.9 0.9" fill="none" stroke="#2b7f58" stroke-width="1.2"/></svg><div class="t" style="left:160.2px;top:460.21px;font-size:7.8px;line-height:7.8px;color:#23a263;-webkit-text-stroke:0.07px #23a263;">Сведения о производителе</div><div class="t" style="left:155px;top:474.12px;font-size:6.5px;line-height:6.5px;color:#4d4d4d;">Производитель:</div><div class="b" style="left:239.8px;top:470.6px;width:136.80px;height:12.40px;background:#fff;border:1px solid #cdcdcd;border-radius:1.5px;box-sizing:border-box;box-shadow:inset 0 1px 1px rgba(0,0,0,0.04);"></div><div class="b" style="left:355.0px;top:471.1px;width:1.00px;height:11.40px;background:#d8d8d8;"></div><div class="b" style="left:365.8px;top:471.1px;width:1.00px;height:11.40px;background:#d8d8d8;"></div><svg class="b" style="left:359.4px;top:475.3px;" width="3" height="3" viewBox="0 0 3 3"><rect x="0.6" y="0.6" width="1.8" height="1.8" fill="#333"/></svg><svg class="b" style="left:368.25000000000006px;top:473.5px;" width="7" height="7" viewBox="0 0 7 7"><g fill="none" stroke="#5a5a5a" stroke-width="0.8"><rect x="0.9" y="2.6" width="2.7" height="3.4" rx="1.2" transform="rotate(45 2.25 4.3)"/><rect x="2.95" y="0.5" width="2.7" height="3.4" rx="1.2" transform="rotate(45 4.3 2.2)"/></g></svg><div class="t" style="left:155px;top:491.22px;font-size:6.5px;line-height:6.5px;color:#4d4d4d;">Марка (бренд):</div><div class="b" style="left:239.8px;top:487.7px;width:136.80px;height:12.40px;background:#fff;border:1px solid #cdcdcd;border-radius:1.5px;box-sizing:border-box;box-shadow:inset 0 1px 1px rgba(0,0,0,0.04);"></div><div class="b" style="left:355.0px;top:488.2px;width:1.00px;height:11.40px;background:#d8d8d8;"></div><div class="b" style="left:365.8px;top:488.2px;width:1.00px;height:11.40px;background:#d8d8d8;"></div><svg class="b" style="left:359.4px;top:492.4px;" width="3" height="3" viewBox="0 0 3 3"><rect x="0.6" y="0.6" width="1.8" height="1.8" fill="#333"/></svg><svg class="b" style="left:368.25000000000006px;top:490.59999999999997px;" width="7" height="7" viewBox="0 0 7 7"><g fill="none" stroke="#5a5a5a" stroke-width="0.8"><rect x="0.9" y="2.6" width="2.7" height="3.4" rx="1.2" transform="rotate(45 2.25 4.3)"/><rect x="2.95" y="0.5" width="2.7" height="3.4" rx="1.2" transform="rotate(45 4.3 2.2)"/></g></svg><div class="t" style="left:155px;top:508.32px;font-size:6.5px;line-height:6.5px;color:#4d4d4d;">Производитель (импортер):</div><div class="b" style="left:239.8px;top:504.8px;width:136.80px;height:12.40px;background:#fff;border:1px solid #cdcdcd;border-radius:1.5px;box-sizing:border-box;box-shadow:inset 0 1px 1px rgba(0,0,0,0.04);"></div><div class="b" style="left:355.0px;top:505.3px;width:1.00px;height:11.40px;background:#d8d8d8;"></div><div class="b" style="left:365.8px;top:505.3px;width:1.00px;height:11.40px;background:#d8d8d8;"></div><svg class="b" style="left:359.4px;top:509.5px;" width="3" height="3" viewBox="0 0 3 3"><rect x="0.6" y="0.6" width="1.8" height="1.8" fill="#333"/></svg><svg class="b" style="left:368.25000000000006px;top:507.7px;" width="7" height="7" viewBox="0 0 7 7"><g fill="none" stroke="#5a5a5a" stroke-width="0.8"><rect x="0.9" y="2.6" width="2.7" height="3.4" rx="1.2" transform="rotate(45 2.25 4.3)"/><rect x="2.95" y="0.5" width="2.7" height="3.4" rx="1.2" transform="rotate(45 4.3 2.2)"/></g></svg><div class="b" style="left:458.6px;top:116.6px;width:166.40px;height:1.00px;background:#d6d6d6;"></div><div class="b" style="left:602.8px;top:113px;width:1.00px;height:4.00px;background:#e4e4e4;"></div><div class="b" style="left:613.2px;top:113px;width:1.00px;height:4.00px;background:#e4e4e4;"></div><div class="t" style="left:387px;top:126.13px;font-size:6.5px;line-height:6.5px;color:#4d4d4d;">Качество:</div><div class="b" style="left:459px;top:122.6px;width:81.60px;height:12.00px;background:#fff;border:1px solid #cdcdcd;border-radius:1.5px;box-sizing:border-box;box-shadow:inset 0 1px 1px rgba(0,0,0,0.04);"></div><div class="t" style="left:461.2px;top:125.92px;font-size:6.5px;line-height:6.5px;color:#333;">Новый</div><div class="t" style="left:545.9px;top:124.92px;font-size:6.5px;line-height:6.5px;color:#3266b3;text-decoration:underline;text-decoration-color:#7ea0d3;">Товары другого качества</div><div class="t" style="left:545.9px;top:132.83px;font-size:6.5px;line-height:6.5px;color:#3266b3;text-decoration:underline;text-decoration-color:#7ea0d3;">(0)</div><svg class="b" style="left:382.4px;top:146.7px;" width="7" height="5" viewBox="0 0 7 5"><path d="M0.9 0.9 L3.4 3.4 L5.9 0.9" fill="none" stroke="#2b7f58" stroke-width="1.2"/></svg><div class="t" style="left:392.59999999999997px;top:145.21px;font-size:7.8px;line-height:7.8px;color:#23a263;-webkit-text-stroke:0.07px #23a263;">Единицы измерения и условия хранения</div><div class="b" style="left:387.6px;top:156.10000000000002px;width:7.50px;height:7.50px;background:#fff;border:1px solid #c2c2c2;border-radius:1px;box-sizing:border-box;"></div><div class="t" style="left:398.4px;top:157.13px;font-size:6.5px;line-height:6.5px;color:#4d4d4d;">Упаковки</div><div class="t" style="left:387px;top:172.33px;font-size:6.5px;line-height:6.5px;color:#4d4d4d;">Единица хранения:</div><div class="b" style="left:448.2px;top:169px;width:61.40px;height:12.00px;background:#f6f6f6;border:1px solid #cdcdcd;border-radius:1.5px;box-sizing:border-box;box-shadow:inset 0 1px 1px rgba(0,0,0,0.04);"></div><div class="b" style="left:498.8px;top:169.5px;width:1.00px;height:11.00px;background:#d8d8d8;"></div><div class="b" style="left:502.45000000000005px;top:175.8px;width:4.30px;height:1.00px;background:#bdbdbd;"></div><div class="t" style="left:450.4px;top:172.33px;font-size:6.5px;line-height:6.5px;color:#333;">Штука</div><div class="b" style="left:515.3px;top:171.3px;width:7.50px;height:7.50px;background:#fff;border:1px solid #c2c2c2;border-radius:1px;box-sizing:border-box;"></div><div class="t" style="left:525.6px;top:172.33px;font-size:6.5px;line-height:6.5px;color:#4d4d4d;">поставляется в таре</div><div class="b" style="left:387.6px;top:186.3px;width:7.50px;height:7.50px;background:#fff;border:1px solid #c2c2c2;border-radius:1px;box-sizing:border-box;"></div><div class="t" style="left:398.4px;top:187.33px;font-size:6.5px;line-height:6.5px;color:#4d4d4d;">Вес</div><div class="b" style="left:387.6px;top:199.3px;width:7.50px;height:7.50px;background:#fff;border:1px solid #c2c2c2;border-radius:1px;box-sizing:border-box;"></div><div class="t" style="left:398.4px;top:200.33px;font-size:6.5px;line-height:6.5px;color:#4d4d4d;">Объем</div><div class="b" style="left:387.6px;top:212.60000000000002px;width:7.50px;height:7.50px;background:#fff;border:1px solid #c2c2c2;border-radius:1px;box-sizing:border-box;"></div><div class="t" style="left:398.4px;top:213.63px;font-size:6.5px;line-height:6.5px;color:#4d4d4d;">Длина</div><div class="b" style="left:387.6px;top:225.70000000000002px;width:7.50px;height:7.50px;background:#fff;border:1px solid #c2c2c2;border-radius:1px;box-sizing:border-box;"></div><div class="t" style="left:398.4px;top:226.73px;font-size:6.5px;line-height:6.5px;color:#4d4d4d;">Площадь</div><svg class="b" style="left:382.4px;top:240.5px;" width="7" height="5" viewBox="0 0 7 5"><path d="M0.9 0.9 L3.4 3.4 L5.9 0.9" fill="none" stroke="#2b7f58" stroke-width="1.2"/></svg><div class="t" style="left:392.59999999999997px;top:239.01px;font-size:7.8px;line-height:7.8px;color:#23a263;-webkit-text-stroke:0.07px #23a263;">Финансовый учет</div><div class="t" style="left:387px;top:252.93px;font-size:6.5px;line-height:6.5px;color:#4d4d4d;">Группа аналитического учета:</div><div class="b" style="left:480px;top:249.3px;width:144.40px;height:12.40px;background:#fff;border:1px solid #cdcdcd;border-radius:1.5px;box-sizing:border-box;box-shadow:inset 0 1px 1px rgba(0,0,0,0.04);"></div><div class="b" style="left:603.0px;top:249.8px;width:1.00px;height:11.40px;background:#d8d8d8;"></div><div class="b" style="left:613.3px;top:249.8px;width:1.00px;height:11.40px;background:#d8d8d8;"></div><svg class="b" style="left:607.15px;top:254.0px;" width="3" height="3" viewBox="0 0 3 3"><rect x="0.6" y="0.6" width="1.8" height="1.8" fill="#333"/></svg><svg class="b" style="left:615.8999999999999px;top:252.2px;" width="7" height="7" viewBox="0 0 7 7"><g fill="none" stroke="#5a5a5a" stroke-width="0.8"><rect x="0.9" y="2.6" width="2.7" height="3.4" rx="1.2" transform="rotate(45 2.25 4.3)"/><rect x="2.95" y="0.5" width="2.7" height="3.4" rx="1.2" transform="rotate(45 4.3 2.2)"/></g></svg><div class="t" style="left:387px;top:270.32px;font-size:6.5px;line-height:6.5px;color:#4d4d4d;">Группа финансового учета:</div><div class="b" style="left:480px;top:266.8px;width:144.40px;height:12.40px;background:#fff;border:1px solid #cdcdcd;border-radius:1.5px;box-sizing:border-box;box-shadow:inset 0 1px 1px rgba(0,0,0,0.04);"></div><div class="b" style="left:603.0px;top:267.3px;width:1.00px;height:11.40px;background:#d8d8d8;"></div><div class="b" style="left:613.3px;top:267.3px;width:1.00px;height:11.40px;background:#d8d8d8;"></div><svg class="b" style="left:607.15px;top:271.5px;" width="3" height="3" viewBox="0 0 3 3"><rect x="0.6" y="0.6" width="1.8" height="1.8" fill="#333"/></svg><svg class="b" style="left:615.8999999999999px;top:269.7px;" width="7" height="7" viewBox="0 0 7 7"><g fill="none" stroke="#5a5a5a" stroke-width="0.8"><rect x="0.9" y="2.6" width="2.7" height="3.4" rx="1.2" transform="rotate(45 2.25 4.3)"/><rect x="2.95" y="0.5" width="2.7" height="3.4" rx="1.2" transform="rotate(45 4.3 2.2)"/></g></svg><div class="t" style="left:387px;top:285.93px;font-size:6.5px;line-height:6.5px;color:#3266b3;text-decoration:underline;text-decoration-color:#7ea0d3;">Распределение продаж по направлениям деятельности</div><svg class="b" style="left:382.4px;top:299.5px;" width="7" height="5" viewBox="0 0 7 5"><path d="M0.9 0.9 L3.4 3.4 L5.9 0.9" fill="none" stroke="#2b7f58" stroke-width="1.2"/></svg><div class="t" style="left:392.59999999999997px;top:298.01px;font-size:7.8px;line-height:7.8px;color:#23a263;-webkit-text-stroke:0.07px #23a263;">Регламентированный учет</div><div class="b" style="left:387.6px;top:308.7px;width:7.50px;height:7.50px;background:#fff;border:1px solid #e4e4e4;border-radius:1px;box-sizing:border-box;"></div><div class="t" style="left:398.4px;top:309.72px;font-size:6.5px;line-height:6.5px;color:#555;">Импортный товар (учет по ГТД или РНПТ)</div><div class="b" style="left:387.6px;top:322.1px;width:7.50px;height:7.50px;background:#fff;border:1px solid #e4e4e4;border-radius:1px;box-sizing:border-box;"></div><div class="t" style="left:398.4px;top:323.12px;font-size:6.5px;line-height:6.5px;color:#555;">Прослеживаемый товар</div><div class="b" style="left:387.6px;top:335.3px;width:7.50px;height:7.50px;background:#fff;border:1px solid #e4e4e4;border-radius:1px;box-sizing:border-box;"></div><div class="t" style="left:398.4px;top:336.32px;font-size:6.5px;line-height:6.5px;color:#555;">Подакцизный товар</div><div class="b" style="left:387.6px;top:348.7px;width:7.50px;height:7.50px;background:#fff;border:1px solid #e4e4e4;border-radius:1px;box-sizing:border-box;"></div><div class="t" style="left:398.4px;top:349.72px;font-size:6.5px;line-height:6.5px;color:#555;">Облагается НДС у покупателя товара</div><div class="t" style="left:472.5px;top:322.65px;font-size:7px;line-height:7px;color:#2f6db5;font-weight:bold;">?</div><svg class="b" style="left:382.4px;top:363.3px;" width="7" height="5" viewBox="0 0 7 5"><path d="M0.9 0.9 L3.4 3.4 L5.9 0.9" fill="none" stroke="#2b7f58" stroke-width="1.2"/></svg><div class="t" style="left:392.59999999999997px;top:361.81px;font-size:7.8px;line-height:7.8px;color:#23a263;-webkit-text-stroke:0.07px #23a263;">Общероссийские классификаторы</div><div class="t" style="left:387px;top:375.72px;font-size:6.5px;line-height:6.5px;color:#4d4d4d;">ОКВЭД:</div><div class="b" style="left:418.3px;top:372.2px;width:87.10px;height:12.40px;background:#fff;border:1px solid #cdcdcd;border-radius:1.5px;box-sizing:border-box;box-shadow:inset 0 1px 1px rgba(0,0,0,0.04);"></div><div class="b" style="left:483.5px;top:372.7px;width:1.00px;height:11.40px;background:#d8d8d8;"></div><div class="b" style="left:493.9px;top:372.7px;width:1.00px;height:11.40px;background:#d8d8d8;"></div><svg class="b" style="left:487.7px;top:376.9px;" width="3" height="3" viewBox="0 0 3 3"><rect x="0.6" y="0.6" width="1.8" height="1.8" fill="#333"/></svg><svg class="b" style="left:496.7px;top:375.09999999999997px;" width="7" height="7" viewBox="0 0 7 7"><g fill="none" stroke="#5a5a5a" stroke-width="0.8"><rect x="0.9" y="2.6" width="2.7" height="3.4" rx="1.2" transform="rotate(45 2.25 4.3)"/><rect x="2.95" y="0.5" width="2.7" height="3.4" rx="1.2" transform="rotate(45 4.3 2.2)"/></g></svg><div class="t" style="left:387px;top:406.52px;font-size:6.5px;line-height:6.5px;color:#4d4d4d;">ОКВЭД2:</div><div class="b" style="left:418.3px;top:403.0px;width:87.10px;height:12.40px;background:#fff;border:1px solid #cdcdcd;border-radius:1.5px;box-sizing:border-box;box-shadow:inset 0 1px 1px rgba(0,0,0,0.04);"></div><div class="b" style="left:483.5px;top:403.5px;width:1.00px;height:11.40px;background:#d8d8d8;"></div><div class="b" style="left:493.9px;top:403.5px;width:1.00px;height:11.40px;background:#d8d8d8;"></div><svg class="b" style="left:487.7px;top:407.7px;" width="3" height="3" viewBox="0 0 3 3"><rect x="0.6" y="0.6" width="1.8" height="1.8" fill="#333"/></svg><svg class="b" style="left:496.7px;top:405.9px;" width="7" height="7" viewBox="0 0 7 7"><g fill="none" stroke="#5a5a5a" stroke-width="0.8"><rect x="0.9" y="2.6" width="2.7" height="3.4" rx="1.2" transform="rotate(45 2.25 4.3)"/><rect x="2.95" y="0.5" width="2.7" height="3.4" rx="1.2" transform="rotate(45 4.3 2.2)"/></g></svg><div class="t" style="left:387px;top:437.32px;font-size:6.5px;line-height:6.5px;color:#4d4d4d;">ОКП:</div><div class="b" style="left:418.3px;top:433.8px;width:87.10px;height:12.40px;background:#fff;border:1px solid #cdcdcd;border-radius:1.5px;box-sizing:border-box;box-shadow:inset 0 1px 1px rgba(0,0,0,0.04);"></div><div class="b" style="left:483.5px;top:434.3px;width:1.00px;height:11.40px;background:#d8d8d8;"></div><div class="b" style="left:493.9px;top:434.3px;width:1.00px;height:11.40px;background:#d8d8d8;"></div><svg class="b" style="left:487.7px;top:438.5px;" width="3" height="3" viewBox="0 0 3 3"><rect x="0.6" y="0.6" width="1.8" height="1.8" fill="#333"/></svg><svg class="b" style="left:496.7px;top:436.7px;" width="7" height="7" viewBox="0 0 7 7"><g fill="none" stroke="#5a5a5a" stroke-width="0.8"><rect x="0.9" y="2.6" width="2.7" height="3.4" rx="1.2" transform="rotate(45 2.25 4.3)"/><rect x="2.95" y="0.5" width="2.7" height="3.4" rx="1.2" transform="rotate(45 4.3 2.2)"/></g></svg><div class="t" style="left:387px;top:468.02px;font-size:6.5px;line-height:6.5px;color:#4d4d4d;">ОКПД2:</div><div class="b" style="left:418.3px;top:464.5px;width:87.10px;height:12.40px;background:#fff;border:1px solid #cdcdcd;border-radius:1.5px;box-sizing:border-box;box-shadow:inset 0 1px 1px rgba(0,0,0,0.04);"></div><div class="b" style="left:483.5px;top:465.0px;width:1.00px;height:11.40px;background:#d8d8d8;"></div><div class="b" style="left:493.9px;top:465.0px;width:1.00px;height:11.40px;background:#d8d8d8;"></div><svg class="b" style="left:487.7px;top:469.2px;" width="3" height="3" viewBox="0 0 3 3"><rect x="0.6" y="0.6" width="1.8" height="1.8" fill="#333"/></svg><svg class="b" style="left:496.7px;top:467.4px;" width="7" height="7" viewBox="0 0 7 7"><g fill="none" stroke="#5a5a5a" stroke-width="0.8"><rect x="0.9" y="2.6" width="2.7" height="3.4" rx="1.2" transform="rotate(45 2.25 4.3)"/><rect x="2.95" y="0.5" width="2.7" height="3.4" rx="1.2" transform="rotate(45 4.3 2.2)"/></g></svg><div class="t" style="left:387px;top:497.32px;font-size:6.5px;line-height:6.5px;color:#4d4d4d;">Код вида номенклатурной классификации:</div><div class="b" style="left:387px;top:505.7px;width:132.50px;height:17.30px;background:#fff;border:1px solid #cdcdcd;border-radius:1.5px;box-sizing:border-box;box-shadow:inset 0 1px 1px rgba(0,0,0,0.04);"></div><div class="b" style="left:508.6px;top:506.2px;width:1.00px;height:16.30px;background:#d8d8d8;"></div><div class="b" style="left:512.3px;top:515.15px;width:4.30px;height:1.00px;background:#bdbdbd;"></div><div class="b" style="left:145.4px;top:521px;width:841.60px;height:3.00px;background:#fff;"></div><div class="b" style="left:144.4px;top:521px;width:843.60px;height:1.00px;background:#d2d2d2;"></div><div class="b" style="left:38.6px;top:82px;width:105.70px;height:10.80px;background:#fffef2;border:1px solid #e3dfc6;box-sizing:border-box;box-shadow:0 0 1.5px rgba(0,0,0,0.18);"></div><div class="t" style="left:40.5px;top:84.92px;font-size:6.5px;line-height:6.5px;color:#1e1e1e;-webkit-text-stroke:0.15px #1e1e1e;">Бюджетирование и планирование</div><svg class="b" style="left:330px;top:285px;" width="110" height="90" viewBox="0 0 110 90"><path d="M13.5 12.5 L27 12.5 L22.6 17 L93.6 75.6 L91.4 78 L18.6 21.3 L16 26 Z" fill="#f03a2c" stroke="#e0281e" stroke-width="0.6" stroke-linejoin="round"/></svg>
</body></html>
